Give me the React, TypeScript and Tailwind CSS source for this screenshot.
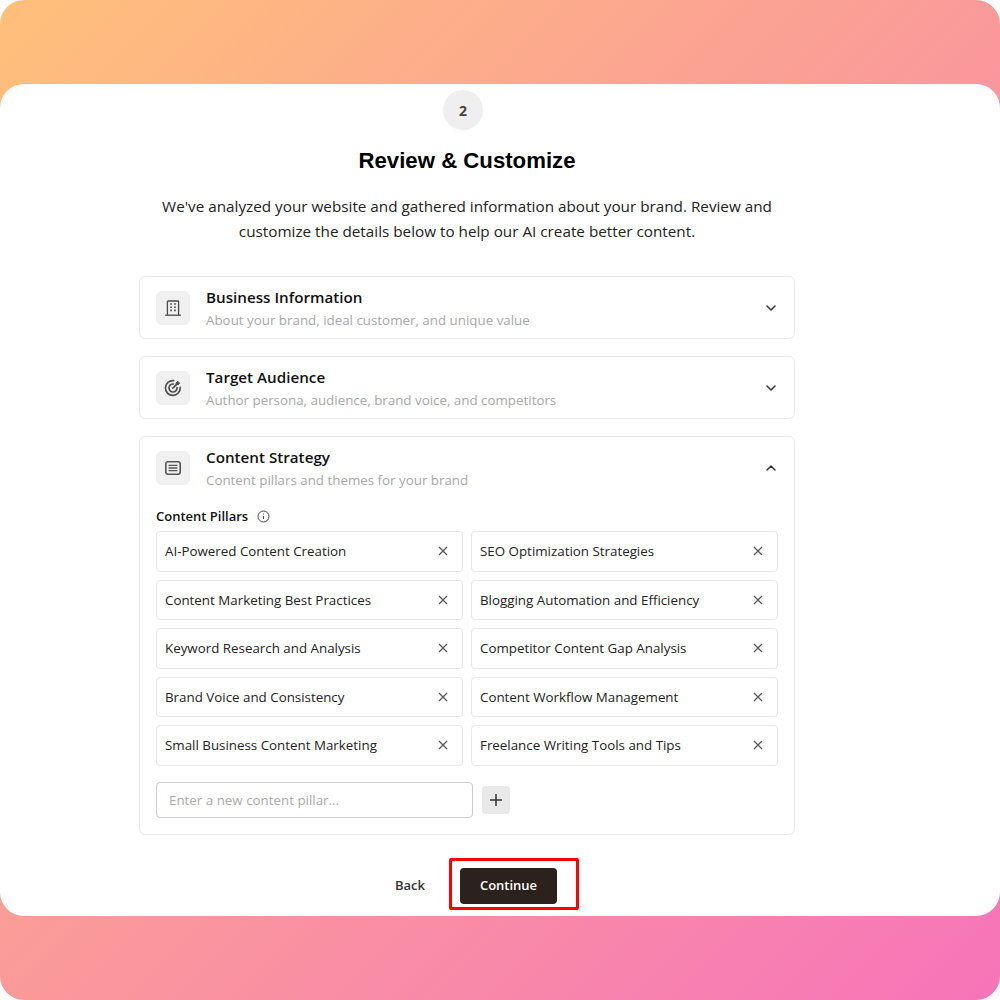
import React from "react";

const pillars = [
  "AI-Powered Content Creation",
  "SEO Optimization Strategies",
  "Content Marketing Best Practices",
  "Blogging Automation and Efficiency",
  "Keyword Research and Analysis",
  "Competitor Content Gap Analysis",
  "Brand Voice and Consistency",
  "Content Workflow Management",
  "Small Business Content Marketing",
  "Freelance Writing Tools and Tips",
];

function Building() {
  return (
    <svg width="18" height="18" viewBox="0 0 18 18" fill="none" stroke="#4a4a4a" strokeWidth="1.3">
      <path d="M3.4 16V2.8c0-.5.3-.8.8-.8h9.6c.5 0 .8.3.8.8V16" />
      <path d="M1.2 16.2h15.6" />
      <path d="M6.2 5h1.7M10.1 5h1.7M6.2 8.2h1.7M10.1 8.2h1.7M6.2 11.4h1.7M10.1 11.4h1.7" strokeWidth="1.6" />
    </svg>
  );
}
function Target() {
  return (
    <svg width="18" height="18" viewBox="0 0 18 18" fill="none" stroke="#4f4f4f" strokeWidth="1.7" strokeLinecap="round">
      <path d="M9.6 1.6A7.4 7.4 0 1 0 16.2 8.4" />
      <path d="M9.4 5A4 4 0 1 0 13 8.6" />
      <path d="M8.8 9.2l4.6-4.6" />
      <path d="M12.3 3.8l1.6-1.6.4 1.5 1.5.4-1.6 1.6-1.6-.3z" fill="#4f4f4f" strokeWidth="1" />
    </svg>
  );
}
function Lines() {
  return (
    <svg width="18" height="18" viewBox="0 0 18 18" fill="none" stroke="#555" strokeWidth="1.6" strokeLinecap="round">
      <rect x="1.8" y="2.8" width="14.4" height="12.4" rx="2.2" />
      <path d="M5 6.4h8M5 9h8M5 11.6h8" strokeWidth="1.3" />
    </svg>
  );
}
function Chevron({ up }: { up?: boolean }) {
  return (
    <svg width="12" height="12" viewBox="0 0 12 12" fill="none" stroke="#333" strokeWidth="1.5" strokeLinecap="round" strokeLinejoin="round">
      <path d={up ? "M2 8l4-4 4 4" : "M2 4l4 4 4-4"} />
    </svg>
  );
}
function X() {
  return (
    <svg width="10" height="10" viewBox="0 0 10 10" fill="none" stroke="#555" strokeWidth="1.2">
      <path d="M1 1l8 8M9 1l-8 8" />
    </svg>
  );
}

function Header({ icon, title, sub, up }: { icon: React.ReactNode; title: string; sub: string; up?: boolean }) {
  return (
    <div className="flex items-center">
      <div className="w-[34px] h-[34px] rounded-[6px] bg-[#f0f0f0] flex items-center justify-center shrink-0">{icon}</div>
      <div className="ml-[16px] flex-1">
        <div className="text-[15.2px] leading-[22px] font-semibold text-[#111]">{title}</div>
        <div className="mt-[2px] text-[13.35px] leading-[20px] text-[#a8a8a8]">{sub}</div>
      </div>
      <div className="mr-[1.5px] w-[12px] flex justify-center"><Chevron up={up} /></div>
    </div>
  );
}

export default function App() {
  return (
    <div className="w-[1000px] h-[1000px] rounded-[24px] overflow-hidden bg-[linear-gradient(135deg,#ffc07a_0%,#f674ba_100%)] pt-[84px] font-['Open_Sans','Noto_Sans',sans-serif]">
      <div className="relative w-[1000px] h-[832px] bg-white rounded-[24px] pl-[139px] pt-[6px]">
        <div className="w-[656px]">
          <div className="w-[40px] h-[40px] rounded-full bg-[#efefef] ml-[304px] flex items-center justify-center text-[14px] font-bold text-[#444]">2</div>
          <h1 className="mt-[16px] text-center text-[22.2px] leading-[30px] font-bold text-black font-['Liberation_Sans',sans-serif]">Review &amp; Customize</h1>
          <p className="mt-[18px] text-center text-[15.27px] leading-[25px] text-[#222] whitespace-nowrap">
            We've analyzed your website and gathered information about your brand. Review and<br />customize the details below to help our AI create better content.
          </p>
          <div className="mt-[32px] flex flex-col gap-[17px]">
            <div className="border border-[#e8e8e8] rounded-[6px] px-[16px] pt-[9px] h-[63px]">
              <Header icon={<Building />} title="Business Information" sub="About your brand, ideal customer, and unique value" />
            </div>
            <div className="border border-[#e8e8e8] rounded-[6px] px-[16px] pt-[9px] h-[63px]">
              <Header icon={<Target />} title="Target Audience" sub="Author persona, audience, brand voice, and competitors" />
            </div>
            <div className="border border-[#e8e8e8] rounded-[6px] px-[16px] pt-[9px] h-[398.5px]">
              <Header up icon={<Lines />} title="Content Strategy" sub="Content pillars and themes for your brand" />
              <div className="mt-[16px] flex items-center gap-[9px] text-[13px] leading-[20px] font-semibold text-[#111]">
                Content Pillars
                <svg width="13" height="13" viewBox="0 0 13 13" fill="none" stroke="#444" strokeWidth="1">
                  <circle cx="6.5" cy="6.5" r="5.5" />
                  <path d="M6.5 6v3M6.5 3.7v.8" />
                </svg>
              </div>
              <div className="mt-[5px] grid grid-cols-2 gap-x-[8px] gap-y-[8px]">
                {pillars.map((p) => (
                  <div key={p} className="h-[40.5px] border border-[#e8e8e8] rounded-[4px] pl-[8px] pr-[14.5px] flex items-center justify-between text-[13.35px] text-[#222]">
                    <span>{p}</span>
                    <X />
                  </div>
                ))}
              </div>
              <div className="mt-[16.5px] flex items-center gap-[9px]">
                <input placeholder="Enter a new content pillar..." className="w-[317px] h-[36px] border border-[#ccc] rounded-[4px] px-[12px] text-[13.35px] placeholder:text-[#aaa] outline-none" />
                <div className="w-[28px] h-[28px] rounded-[4px] bg-[#e8e8e8] flex items-center justify-center">
                  <svg width="14" height="14" viewBox="0 0 14 14" fill="none" stroke="#333" strokeWidth="1.5"><path d="M7 1v12M1 7h12" /></svg>
                </div>
              </div>
            </div>
          </div>
          <div className="mt-[33px] flex items-center">
            <span className="ml-[256px] text-[13px] font-semibold text-[#333]">Back</span>
            <div className="ml-[35px] w-[97px] h-[36.5px] rounded-[4px] bg-[#2b221d] flex items-center justify-center text-[13px] font-semibold text-white">Continue</div>
          </div>
        </div>
        <div className="absolute left-[449px] top-[774px] w-[130px] h-[52px] border-[3px] border-[#ff0000] rounded-[2px]" />
      </div>
    </div>
  );
}
